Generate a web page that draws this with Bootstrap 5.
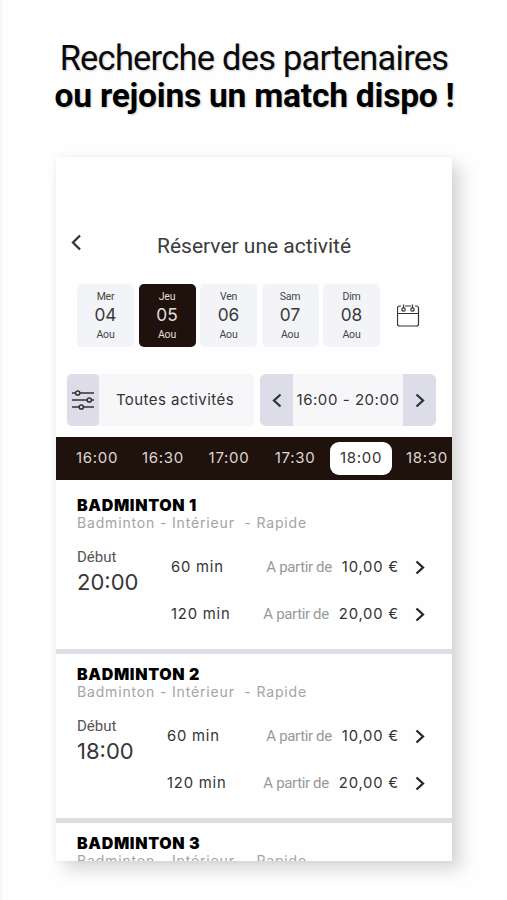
<!DOCTYPE html>
<html lang="fr">
<head>
<meta charset="utf-8">
<meta name="viewport" content="width=device-width, initial-scale=1">
<title>Réserver une activité</title>
<link href="https://cdn.jsdelivr.net/npm/bootstrap@5.3.0/dist/css/bootstrap.min.css" rel="stylesheet">
<style>
body{font-family:Roboto,"Liberation Sans",sans-serif;background:#fefefe;color:#333;height:900px;overflow:hidden;border-left:2px solid #f7f7f7}
svg{display:block;fill:none;stroke:currentColor}
.wide{font-family:Inter,Roboto,sans-serif}
.promo{padding-top:40px;height:157px;font-size:34.4px;line-height:37px;letter-spacing:-.73px;color:#0a0a0a;text-shadow:1px 1px 2px #ccc;white-space:nowrap}
.promo span{margin-right:1px}
.promo strong{font-weight:700;font-size:33.6px;letter-spacing:-.25px;color:#000;display:block}
.phone{width:396px;height:704px;margin-left:54px;background:#fefefe;box-shadow:9px 9px 16px rgba(0,0,0,.15),0 0 7px rgba(0,0,0,.05)}
.topbar{height:127px;padding:77px 0 0 15px}
.topbar h1{font-size:21px;line-height:24px;font-weight:400;margin:0 0 0 76px;color:#3c3c3c}
.days{padding-left:21px;gap:4.5px;height:63px}
.day{width:57px;height:63px;background:#f3f4f8;border-radius:5px;font-size:10.5px;line-height:13px;color:#444;padding-top:6px;letter-spacing:-.2px}
.day b{font-family:Inter,sans-serif;font-weight:400;font-size:17.3px;line-height:24px;padding-bottom:1px;letter-spacing:0;display:block;color:#3a3a3a}
.day.picked,.day.picked b{background:#1f120d;color:#e4dfdd}
.filters{margin-top:27px;padding-left:11px;gap:6px;height:52px;font-size:15px}
.kind{width:187px;background:#f7f7fa;border-radius:5px;color:#333;letter-spacing:.45px}
.kind span{padding-right:3px}
.slot{width:176px;background:#f7f7fa;border-radius:6px;letter-spacing:.55px;white-space:nowrap}
.cap{background:#dcdde8;height:100%;width:33px;flex:none}
.kind .cap{width:32px;border-radius:5px}
.hours{margin-top:11px;height:43px;background:#1f120d;color:#ded6d2;font-size:15px;letter-spacing:.7px;overflow:hidden;padding-left:10px}
.hour{width:62px;height:33px;flex:none;border-radius:9px}
.hour.picked{background:#fff;color:#333}
.courts{height:381px;padding-top:5px}
.court{height:169px;border-bottom:5px solid #dfdfe9;padding:10px 0 0 21px}
.court:nth-child(2){border-color:#dcdee2}
.court h2{font-size:16px;font-weight:900;line-height:20px;margin:0;color:#000;letter-spacing:.65px}
.tags{font-size:14px;line-height:16px;color:#a4a4a6;letter-spacing:.84px;white-space:pre}
.begin{width:90px;padding-top:16px;font-size:15px;line-height:20px;color:#555}
.begin span{display:block;font-size:22px;line-height:31px;color:#383838}
.offers{padding-top:13px}
.offer{height:47px;font-size:14.8px;letter-spacing:.8px}
.offer small{font-family:Roboto,sans-serif;font-size:15px;letter-spacing:-.35px;color:#999;margin:0 10px 0 auto}
.offer svg{margin:0 27px 0 16px;color:#222}
</style>
<script src="https://cdn.jsdelivr.net/npm/bootstrap@5.3.0/dist/js/bootstrap.bundle.min.js"></script>
</head>
<body>
<header class="promo text-center"><span>Recherche des partenaires</span><strong>ou rejoins un match dispo !</strong></header>
<main class="phone overflow-hidden">
  <div class="topbar d-flex align-items-start">
    <svg width="10" height="17" viewBox="0 0 10 17" stroke-width="2.3" stroke="#000"><path d="M9 1.500 2 8.500l7 7"/></svg>
    <h1>Réserver une activité</h1>
  </div>
  <div class="days d-flex align-items-center text-center">
    <div class="day">Mer<b>04</b>Aou</div>
    <div class="day picked">Jeu<b>05</b>Aou</div>
    <div class="day">Ven<b>06</b>Aou</div>
    <div class="day">Sam<b>07</b>Aou</div>
    <div class="day">Dim<b>08</b>Aou</div>
    <svg class="ms-2 ps-1 flex-shrink-0" width="27" height="23" viewBox="0.500 0 23 23" stroke="#555" stroke-width="1.200"><path d="M4.500 2H3a2 2 0 0 0-2 2v16a2 2 0 0 0 2 2h17a2 2 0 0 0 2-2V4a2 2 0 0 0-2-2h-1.500M8.500 2h6M1 9.500h21"/><circle cx="7" cy="5.500" r="1.700"/><circle cx="16" cy="5.500" r="1.700"/><path d="M7 4V.5M16 4V.5"/></svg>
  </div>
  <div class="filters wide d-flex">
    <div class="kind d-flex align-items-center">
      <div class="cap d-flex align-items-center justify-content-center"><svg width="22" height="22" viewBox="0 0 22 22" stroke="#444" stroke-width="1.500"><path d="M0 4h3.500M8 4h14M0 11h15M19.500 11H22M0 18h7M11.500 18H22"/><circle cx="5.700" cy="4" r="2.100"/><circle cx="17.300" cy="11" r="2.100"/><circle cx="9.300" cy="18" r="2.100"/></svg></div>
      <span class="flex-fill text-center">Toutes activités</span>
    </div>
    <div class="slot d-flex align-items-center overflow-hidden">
      <div class="cap d-flex align-items-center justify-content-center"><svg width="10" height="15" viewBox="0 0 10 15" stroke="#222" stroke-width="2.300"><path d="M8.500 1.500 2 7.500l6.500 6"/></svg></div>
      <span class="flex-fill text-center">16:00 - 20:00</span>
      <div class="cap d-flex align-items-center justify-content-center"><svg width="10" height="15" viewBox="0 0 10 15" stroke="#222" stroke-width="2.300"><path d="m1.500 1.500 6.500 6-6.500 6"/></svg></div>
    </div>
  </div>
  <div class="hours wide d-flex align-items-center">
    <div class="hour d-flex align-items-center justify-content-center">16:00</div>
    <div class="hour d-flex align-items-center justify-content-center ms-1">16:30</div>
    <div class="hour d-flex align-items-center justify-content-center ms-1">17:00</div>
    <div class="hour d-flex align-items-center justify-content-center ms-1">17:30</div>
    <div class="hour picked d-flex align-items-center justify-content-center ms-1">18:00</div>
    <div class="hour d-flex align-items-center justify-content-center ms-1">18:30</div>
  </div>
  <div class="courts overflow-hidden">
    <section class="court">
      <h2 class="wide">BADMINTON 1</h2>
      <div class="tags wide">Badminton - Intérieur  - Rapide</div>
      <div class="d-flex">
        <div class="begin">Début<span class="wide">20:00</span></div>
        <div class="offers wide flex-fill ps-1">
          <div class="offer d-flex align-items-center">60 min<small>A partir de</small>10,00 €<svg width="10" height="15" viewBox="0 0 10 15" stroke-width="2.200"><path d="m1.500 1.500 6.500 6-6.500 6"/></svg></div>
          <div class="offer d-flex align-items-center">120 min<small>A partir de</small>20,00 €<svg width="10" height="15" viewBox="0 0 10 15" stroke-width="2.200"><path d="m1.500 1.500 6.500 6-6.500 6"/></svg></div>
        </div>
      </div>
    </section>
    <section class="court">
      <h2 class="wide">BADMINTON 2</h2>
      <div class="tags wide">Badminton - Intérieur  - Rapide</div>
      <div class="d-flex">
        <div class="begin">Début<span class="wide">18:00</span></div>
        <div class="offers wide flex-fill">
          <div class="offer d-flex align-items-center">60 min<small>A partir de</small>10,00 €<svg width="10" height="15" viewBox="0 0 10 15" stroke-width="2.200"><path d="m1.500 1.500 6.500 6-6.500 6"/></svg></div>
          <div class="offer d-flex align-items-center">120 min<small>A partir de</small>20,00 €<svg width="10" height="15" viewBox="0 0 10 15" stroke-width="2.200"><path d="m1.500 1.500 6.500 6-6.500 6"/></svg></div>
        </div>
      </div>
    </section>
    <section class="court">
      <h2 class="wide">BADMINTON 3</h2>
      <div class="tags wide">Badminton - Intérieur  - Rapide</div>
    </section>
  </div>
</main>
</body>
</html>
